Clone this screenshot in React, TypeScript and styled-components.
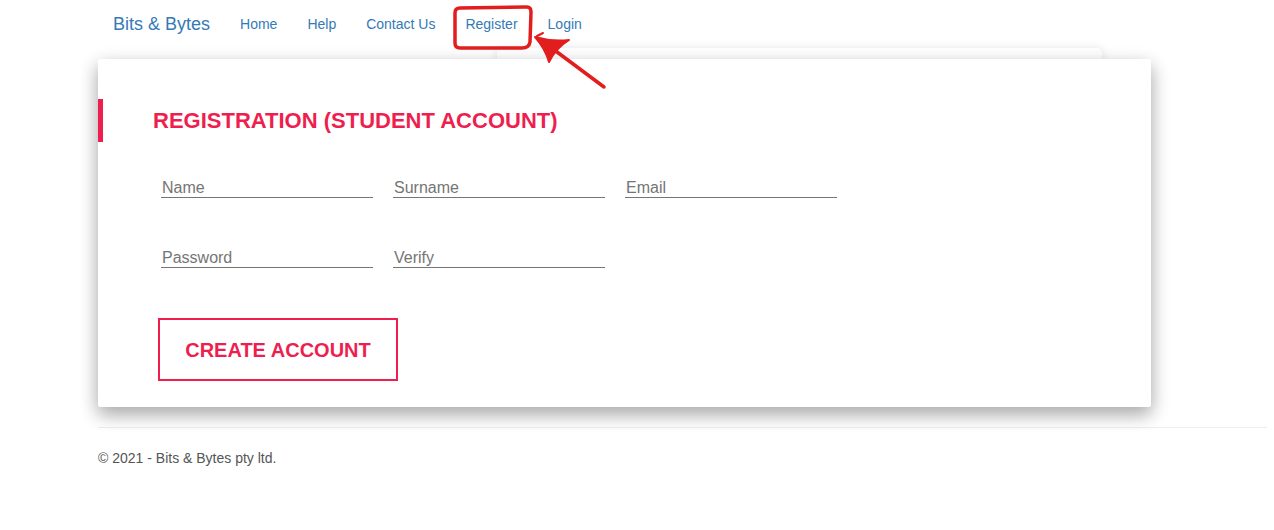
import React from "react";
import styled, { createGlobalStyle } from "styled-components";

const Global = createGlobalStyle`
  html, body { margin: 0; padding: 0; background: #fff; }
  body { font-family: "Liberation Sans", Arial, sans-serif; color: #333; }
  * { box-sizing: border-box; }
`;

const ACCENT = "#ee1f4f";

const Page = styled.div`
  position: relative;
  width: 1274px;
  min-height: 530px;
  overflow: hidden;
`;

const Nav = styled.nav`
  display: flex;
  align-items: center;
  height: 48px;
  padding-left: 113px;
`;

const Brand = styled.a`
  font-size: 18px;
  line-height: 20px;
  color: #337ab7;
  padding-right: 15px;
  text-decoration: none;
`;

const NavLink = styled.a`
  font-size: 14px;
  line-height: 20px;
  color: #337ab7;
  padding: 0 15px;
  text-decoration: none;
`;

const Main = styled.main`
  position: relative;
  padding: 11px 0 0 98px;
`;

const BackCard = styled.div`
  position: absolute;
  left: 497px;
  top: 0;
  width: 605px;
  height: 120px;
  background: #fff;
  border-radius: 5px;
  box-shadow: 0 0 10px rgba(0, 0, 0, 0.1);
`;

const Card = styled.section`
  position: relative;
  width: 1053px;
  background: #fff;
  border-radius: 2px;
  padding: 40px 0 26px;
  box-shadow: 0 8px 17px 0 rgba(0, 0, 0, 0.2), 0 6px 20px 0 rgba(0, 0, 0, 0.19);
`;

const Heading = styled.h2`
  margin: 0;
  border-left: 5px solid ${ACCENT};
  padding-left: 50px;
  height: 43px;
  line-height: 43px;
  font-size: 22px;
  font-weight: bold;
  color: ${ACCENT};
`;

const FieldRow = styled.div<{ $top: number }>`
  display: flex;
  gap: 20px;
  padding-left: 63px;
  margin-top: ${(p) => p.$top}px;
`;

const Field = styled.input`
  width: 212px;
  height: 22px;
  border: none;
  border-bottom: 1px solid #757575;
  padding: 2px 0 0 1px;
  font-family: "Liberation Sans", Arial, sans-serif;
  font-size: 16px;
  color: #333;
  outline: none;
  &::placeholder { color: #757575; }
`;

const ButtonRow = styled.div`
  padding-left: 60px;
  margin-top: 50px;
`;

const CreateButton = styled.button`
  width: 240px;
  height: 63px;
  padding: 2px 0 0;
  background: #fff;
  border: 2px solid ${ACCENT};
  color: ${ACCENT};
  font-family: "Liberation Sans", Arial, sans-serif;
  font-size: 20px;
  font-weight: bold;
  cursor: pointer;
`;

const Footer = styled.footer`
  padding-left: 98px;
  margin-top: 20px;
`;

const Rule = styled.hr`
  margin: 0;
  width: 1169px;
  border: none;
  border-top: 1px solid #eee;
`;

const Copy = styled.p`
  margin: 22px 0 0;
  font-size: 14px;
  line-height: 16px;
  color: #555;
`;

const Annotation = styled.svg`
  position: absolute;
  left: 0;
  top: 0;
  pointer-events: none;
`;

export default function App() {
  return (
    <Page>
      <Global />
      <Nav>
        <Brand href="#">Bits &amp; Bytes</Brand>
        <NavLink href="#">Home</NavLink>
        <NavLink href="#">Help</NavLink>
        <NavLink href="#">Contact Us</NavLink>
        <NavLink href="#">Register</NavLink>
        <NavLink href="#">Login</NavLink>
      </Nav>
      <Main>
        <BackCard />
        <Card>
          <Heading>REGISTRATION (STUDENT ACCOUNT)</Heading>
          <FieldRow $top={34}>
            <Field placeholder="Name" />
            <Field placeholder="Surname" />
            <Field placeholder="Email" />
          </FieldRow>
          <FieldRow $top={48}>
            <Field placeholder="Password" type="password" />
            <Field placeholder="Verify" type="password" />
          </FieldRow>
          <ButtonRow>
            <CreateButton>CREATE ACCOUNT</CreateButton>
          </ButtonRow>
        </Card>
      </Main>
      <Footer>
        <Rule />
        <Copy>© 2021 - Bits &amp; Bytes pty ltd.</Copy>
      </Footer>
      <Annotation width="1274" height="120" viewBox="0 0 1274 120">
        <path
          d="M460 8 L527 7 Q531 7 531 12 L530 42 Q529 48 522 48 L460 48 Q455 48 455 43 L455 13 Q455 8 460 8 Z"
          fill="none"
          stroke="#e21d1d"
          strokeWidth="3.5"
          strokeLinejoin="round"
        />
        <path d="M535 37 Q552 42 569 40 Q556 48 549 62 Q545 48 535 37 Z" fill="#e21d1d" stroke="#e21d1d" strokeWidth="2" strokeLinejoin="round" />
        <path d="M553 49 L604 87" stroke="#e21d1d" strokeWidth="3.5" strokeLinecap="round" fill="none" />
        <path d="M537 36 L543 33" stroke="#e21d1d" strokeWidth="2" strokeLinecap="round" />
      </Annotation>
    </Page>
  );
}
